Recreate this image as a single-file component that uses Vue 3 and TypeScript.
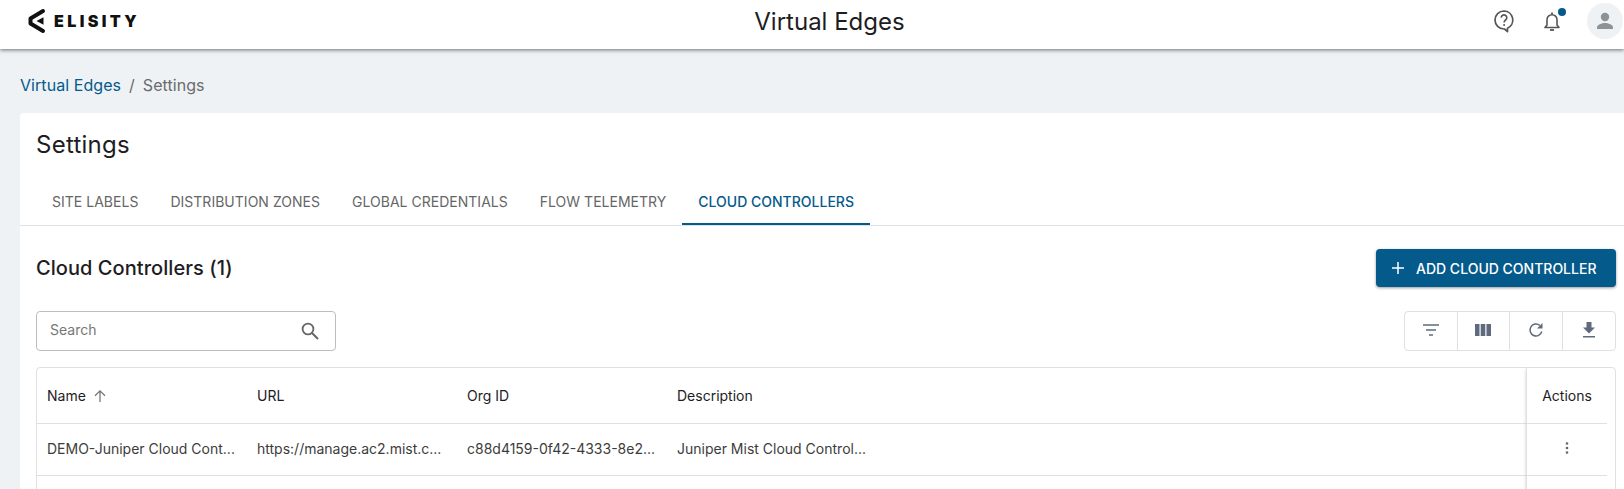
<script setup lang="ts">
interface Column {
  label: string
  width: number
  value: string
}

const tabs = ['Site Labels', 'Distribution Zones', 'Global Credentials', 'Flow Telemetry', 'Cloud Controllers']
const activeTab = 'Cloud Controllers'

const columns: Column[] = [
  { label: 'Name', width: 210, value: 'DEMO-Juniper Cloud Cont...' },
  { label: 'URL', width: 210, value: 'https://manage.ac2.mist.c...' },
  { label: 'Org ID', width: 210, value: 'c88d4159-0f42-4333-8e2...' },
  { label: 'Description', width: 850, value: 'Juniper Mist Cloud Control...' },
]
</script>

<template>
  <div class="page">
    <header class="topbar">
      <div class="logo">
        <svg width="20" height="26" viewBox="0 0 20 26">
          <path d="M16 3 3.500 10.500v5L16 23" fill="none" stroke="#111" stroke-width="4" stroke-linejoin="round" stroke-linecap="round" />
          <path d="M16.500 9.300 9.500 13l7 3.700z" fill="#111" />
        </svg>
        <span class="logo__text">ELISITY</span>
      </div>
      <h1 class="topbar__title">Virtual Edges</h1>
      <div class="topbar__icons">
        <svg class="icon-help" width="24" height="26" viewBox="0 0 24 26">
          <path d="M12 3a9 9 0 1 0 0 18l.5 0 3 2.600v-3.400A9 9 0 0 0 12 3z" fill="none" stroke="#555" stroke-width="1.700" stroke-linejoin="round" />
          <path d="M9.200 9.600a2.800 2.800 0 1 1 4.400 2.400c-1 .7-1.500 1.200-1.500 2.400" fill="none" stroke="#555" stroke-width="1.600" />
          <circle cx="12.100" cy="17" r="1" fill="#555" />
        </svg>
        <span class="bell">
          <svg width="22" height="24" viewBox="0 0 22 24">
            <path d="M4 18.500h14l-2-2.600v-5.200a5 5 0 0 0-10 0v5.200z" fill="none" stroke="#555" stroke-width="1.600" stroke-linejoin="round" />
            <path d="M11 3.600v2" stroke="#555" stroke-width="1.800" />
            <path d="M9 21h4" stroke="#555" stroke-width="1.800" />
          </svg>
          <i class="bell__dot"></i>
        </span>
        <span class="avatar">
          <svg width="20" height="20" viewBox="0 0 20 20">
            <circle cx="10" cy="6" r="4.200" fill="#8c9296" />
            <path d="M2 18v-1.600C2 13.600 7 12 10 12s8 1.600 8 4.400V18z" fill="#8c9296" />
          </svg>
        </span>
      </div>
    </header>

    <nav class="crumbs">
      <a class="crumbs__link">Virtual Edges</a>
      <span class="crumbs__sep">/</span>
      <span class="crumbs__current">Settings</span>
    </nav>

    <main class="card">
      <h2 class="card__title">Settings</h2>
      <div class="tabs">
        <button
          v-for="tab in tabs"
          :key="tab"
          type="button"
          class="tab"
          :class="{ 'tab--active': tab === activeTab }"
        >
          {{ tab }}
        </button>
      </div>

      <section class="panel">
        <div class="panel__head">
          <h3>Cloud Controllers (1)</h3>
          <button type="button" class="add-btn">
            <svg width="14" height="14" viewBox="0 0 14 14">
              <path d="M7 1v12M1 7h12" stroke="#fff" stroke-width="1.500" />
            </svg>
            Add Cloud Controller
          </button>
        </div>

        <div class="toolbar">
          <label class="search">
            <span class="search__text">Search</span>
            <svg width="20" height="20" viewBox="0 0 20 20">
              <circle cx="8" cy="8" r="5.400" fill="none" stroke="#666" stroke-width="1.800" />
              <path d="m12 12 6 6" stroke="#666" stroke-width="2" />
            </svg>
          </label>
          <div class="tools">
            <button type="button" class="tool">
              <svg width="16" height="12" viewBox="0 0 16 12">
                <path d="M0 1h16M3 6h10M6 11h4" stroke="#5f6b7c" stroke-width="1.600" />
              </svg>
            </button>
            <button type="button" class="tool">
              <svg width="16" height="12" viewBox="0 0 16 12">
                <path d="M0 0h4.500v12H0zM5.700 0h4.600v12H5.700zM11.500 0H16v12h-4.500z" fill="#5f6b7c" />
              </svg>
            </button>
            <button type="button" class="tool">
              <svg width="16" height="16" viewBox="0 0 16 16">
                <path d="M13.800 9.500A6 6 0 1 1 11.800 3.300" fill="none" stroke="#5f6b7c" stroke-width="1.500" />
                <path d="M14.500 1v5.500H9z" fill="#5f6b7c" />
              </svg>
            </button>
            <button type="button" class="tool">
              <svg width="14" height="16" viewBox="0 0 14 16">
                <path d="M4.500 0h5v5.500H13L7 11.500 1 5.500h3.500zM1 14h12v1.600H1z" fill="#5f6b7c" />
              </svg>
            </button>
          </div>
        </div>

        <div class="table">
          <div class="table__main">
            <div class="row row--head">
              <div
                v-for="col in columns"
                :key="col.label"
                class="cell"
                :style="{ width: col.width + 'px' }"
              >
                {{ col.label }}
                <svg v-if="col.label === 'Name'" class="sort" width="14" height="14" viewBox="0 0 14 14">
                  <path d="M7 13V2M2 6.800 7 1.800l5 5" fill="none" stroke="#777" stroke-width="1.300" />
                </svg>
              </div>
            </div>
            <div class="row row--body">
              <div
                v-for="col in columns"
                :key="col.label"
                class="cell"
                :style="{ width: col.width + 'px' }"
              >
                {{ col.value }}
              </div>
            </div>
            <div class="row row--empty"></div>
          </div>
          <div class="table__actions">
            <div class="action action--head">Actions</div>
            <div class="action action--body">
              <svg width="4" height="12" viewBox="0 0 4 12">
                <circle cx="2" cy="1.500" r="1.300" fill="#666" />
                <circle cx="2" cy="6" r="1.300" fill="#666" />
                <circle cx="2" cy="10.500" r="1.300" fill="#666" />
              </svg>
            </div>
            <div class="action action--empty"></div>
          </div>
        </div>
      </section>
    </main>
  </div>
</template>

<style>
html,
body {
  margin: 0;
  background: #eef2f5;
}
</style>

<style scoped>
.page {
  width: 1624px;
  height: 489px;
  overflow: hidden;
  background: #eef2f5;
  font-family: Inter, "Liberation Sans", sans-serif;
  color: #1d1d1f;
}

.topbar {
  display: grid;
  grid-template-columns: 1fr auto 1fr;
  align-items: center;
  box-sizing: border-box;
  height: 49px;
  padding: 0 0 7px 27px;
  background: #fff;
  box-shadow: 0 1px 4px rgba(0, 0, 0, 0.55);
  position: relative;
}

.logo {
  display: flex;
  align-items: center;
  gap: 7px;
}

.logo__text {
  font-size: 16px;
  font-weight: 900;
  letter-spacing: 3.400px;
  color: #111;
}

.topbar__title {
  margin: 0 0 0 8px;
  font-size: 24px;
  font-weight: 400;
  color: #1d1d1f;
}

.topbar__icons {
  display: flex;
  align-items: center;
  justify-content: flex-end;
}

.icon-help {
  margin-right: 25px;
}

.bell {
  position: relative;
  display: flex;
  margin-right: 24px;
}

.bell__dot {
  position: absolute;
  top: -1px;
  right: -3px;
  width: 8px;
  height: 8px;
  border-radius: 50%;
  background: #055a8c;
}

.avatar {
  display: flex;
  align-items: center;
  justify-content: center;
  width: 36px;
  height: 36px;
  margin-right: 1px;
  border-radius: 50%;
  background: #eef2f5;
}

.crumbs {
  display: flex;
  gap: 8px;
  padding: 27px 0 0 20px;
  height: 37px;
  font-size: 16px;
  line-height: 19px;
  letter-spacing: 0.060px;
}

.crumbs__link {
  color: #055a8c;
}

.crumbs__sep,
.crumbs__current {
  color: #6b6b6b;
}

.card {
  margin-left: 20px;
  height: 400px;
  padding-top: 1px;
  border-radius: 4px 0 0 0;
  background: #fff;
}

.card__title {
  margin: 16px 0 0 16px;
  font-size: 24px;
  line-height: 29px;
  font-weight: 400;
  letter-spacing: 0.250px;
}

.tabs {
  display: flex;
  height: 48px;
  margin-top: 18px;
  padding-left: 16px;
  border-bottom: 1px solid #dfe2e5;
}

.tab {
  height: 48px;
  padding: 0 16px;
  border: none;
  background: transparent;
  font-family: inherit;
  font-size: 14px;
  font-weight: 400;
  letter-spacing: 0.020px;
  text-transform: uppercase;
  color: #666;
}

.tab--active {
  color: #055a8c;
  font-weight: 500;
  letter-spacing: 0;
  border-bottom: 2px solid #055a8c;
  padding-top: 2px;
}

.panel {
  padding: 23px 8px 0 16px;
}

.panel__head {
  display: flex;
  align-items: center;
  justify-content: space-between;
  height: 38px;
}

.panel__head h3 {
  margin: 0;
  font-size: 20px;
  font-weight: 500;
  letter-spacing: 0.060px;
  color: #1d1d1f;
}

.add-btn {
  display: flex;
  align-items: center;
  gap: 11px;
  width: 240px;
  height: 38px;
  padding: 0 0 0 15px;
  border: none;
  border-radius: 4px;
  background: #055a8c;
  box-shadow: 0 1px 3px rgba(0, 0, 0, 0.4);
  color: #fff;
  font-family: inherit;
  font-size: 14px;
  font-weight: 500;
  letter-spacing: 0;
  text-transform: uppercase;
}

.toolbar {
  display: flex;
  align-items: center;
  justify-content: space-between;
  margin-top: 24px;
}

.search {
  display: flex;
  align-items: center;
  justify-content: space-between;
  box-sizing: border-box;
  width: 300px;
  height: 40px;
  padding: 0 15px 0 13px;
  border: 1px solid #bdbdbd;
  border-radius: 4px;
  font-size: 14px;
  color: #777;
}

.search__text {
  margin-bottom: 3px;
}

.tools {
  display: flex;
  height: 40px;
  border: 1px solid #e0e0e0;
  border-radius: 4px;
  box-sizing: border-box;
}

.tool {
  display: flex;
  align-items: center;
  justify-content: center;
  width: 52.500px;
  padding: 0 0 2px;
  border: none;
  border-right: 1px solid #e0e0e0;
  background: transparent;
}

.tool:last-child {
  border-right: none;
}

.table {
  display: flex;
  box-sizing: border-box;
  height: 130px;
  margin-top: 16px;
  border: 1px solid #e0e0e0;
  border-radius: 4px;
  font-size: 14px;
}

.table__main {
  flex: 1;
}

.row {
  display: flex;
  align-items: center;
  border-bottom: 1px solid #e0e0e0;
}

.row--head {
  height: 55px;
  color: #1d1d1f;
  font-weight: 400;
}

.row--body {
  height: 52px;
  padding-bottom: 3px;
  box-sizing: border-box;
  color: #3c3c3c;
}

.row--empty {
  border-bottom: none;
}

.cell {
  display: flex;
  align-items: center;
  gap: 6px;
  box-sizing: border-box;
  padding-left: 10px;
  white-space: nowrap;
}

.sort {
  margin-left: 1px;
}

.table__actions {
  width: 89px;
  flex: none;
  padding-right: 8px;
  box-sizing: border-box;
  box-shadow: -2px 0 3px -2px rgba(0, 0, 0, 0.2);
  border-left: 1px solid #e0e0e0;
}

.action {
  display: flex;
  align-items: center;
  justify-content: center;
  border-bottom: 1px solid #e0e0e0;
}

.action--head {
  height: 55px;
  font-weight: 400;
}

.action--body {
  height: 52px;
  box-sizing: border-box;
  padding-bottom: 3px;
}

.action--empty {
  border-bottom: none;
}
</style>
